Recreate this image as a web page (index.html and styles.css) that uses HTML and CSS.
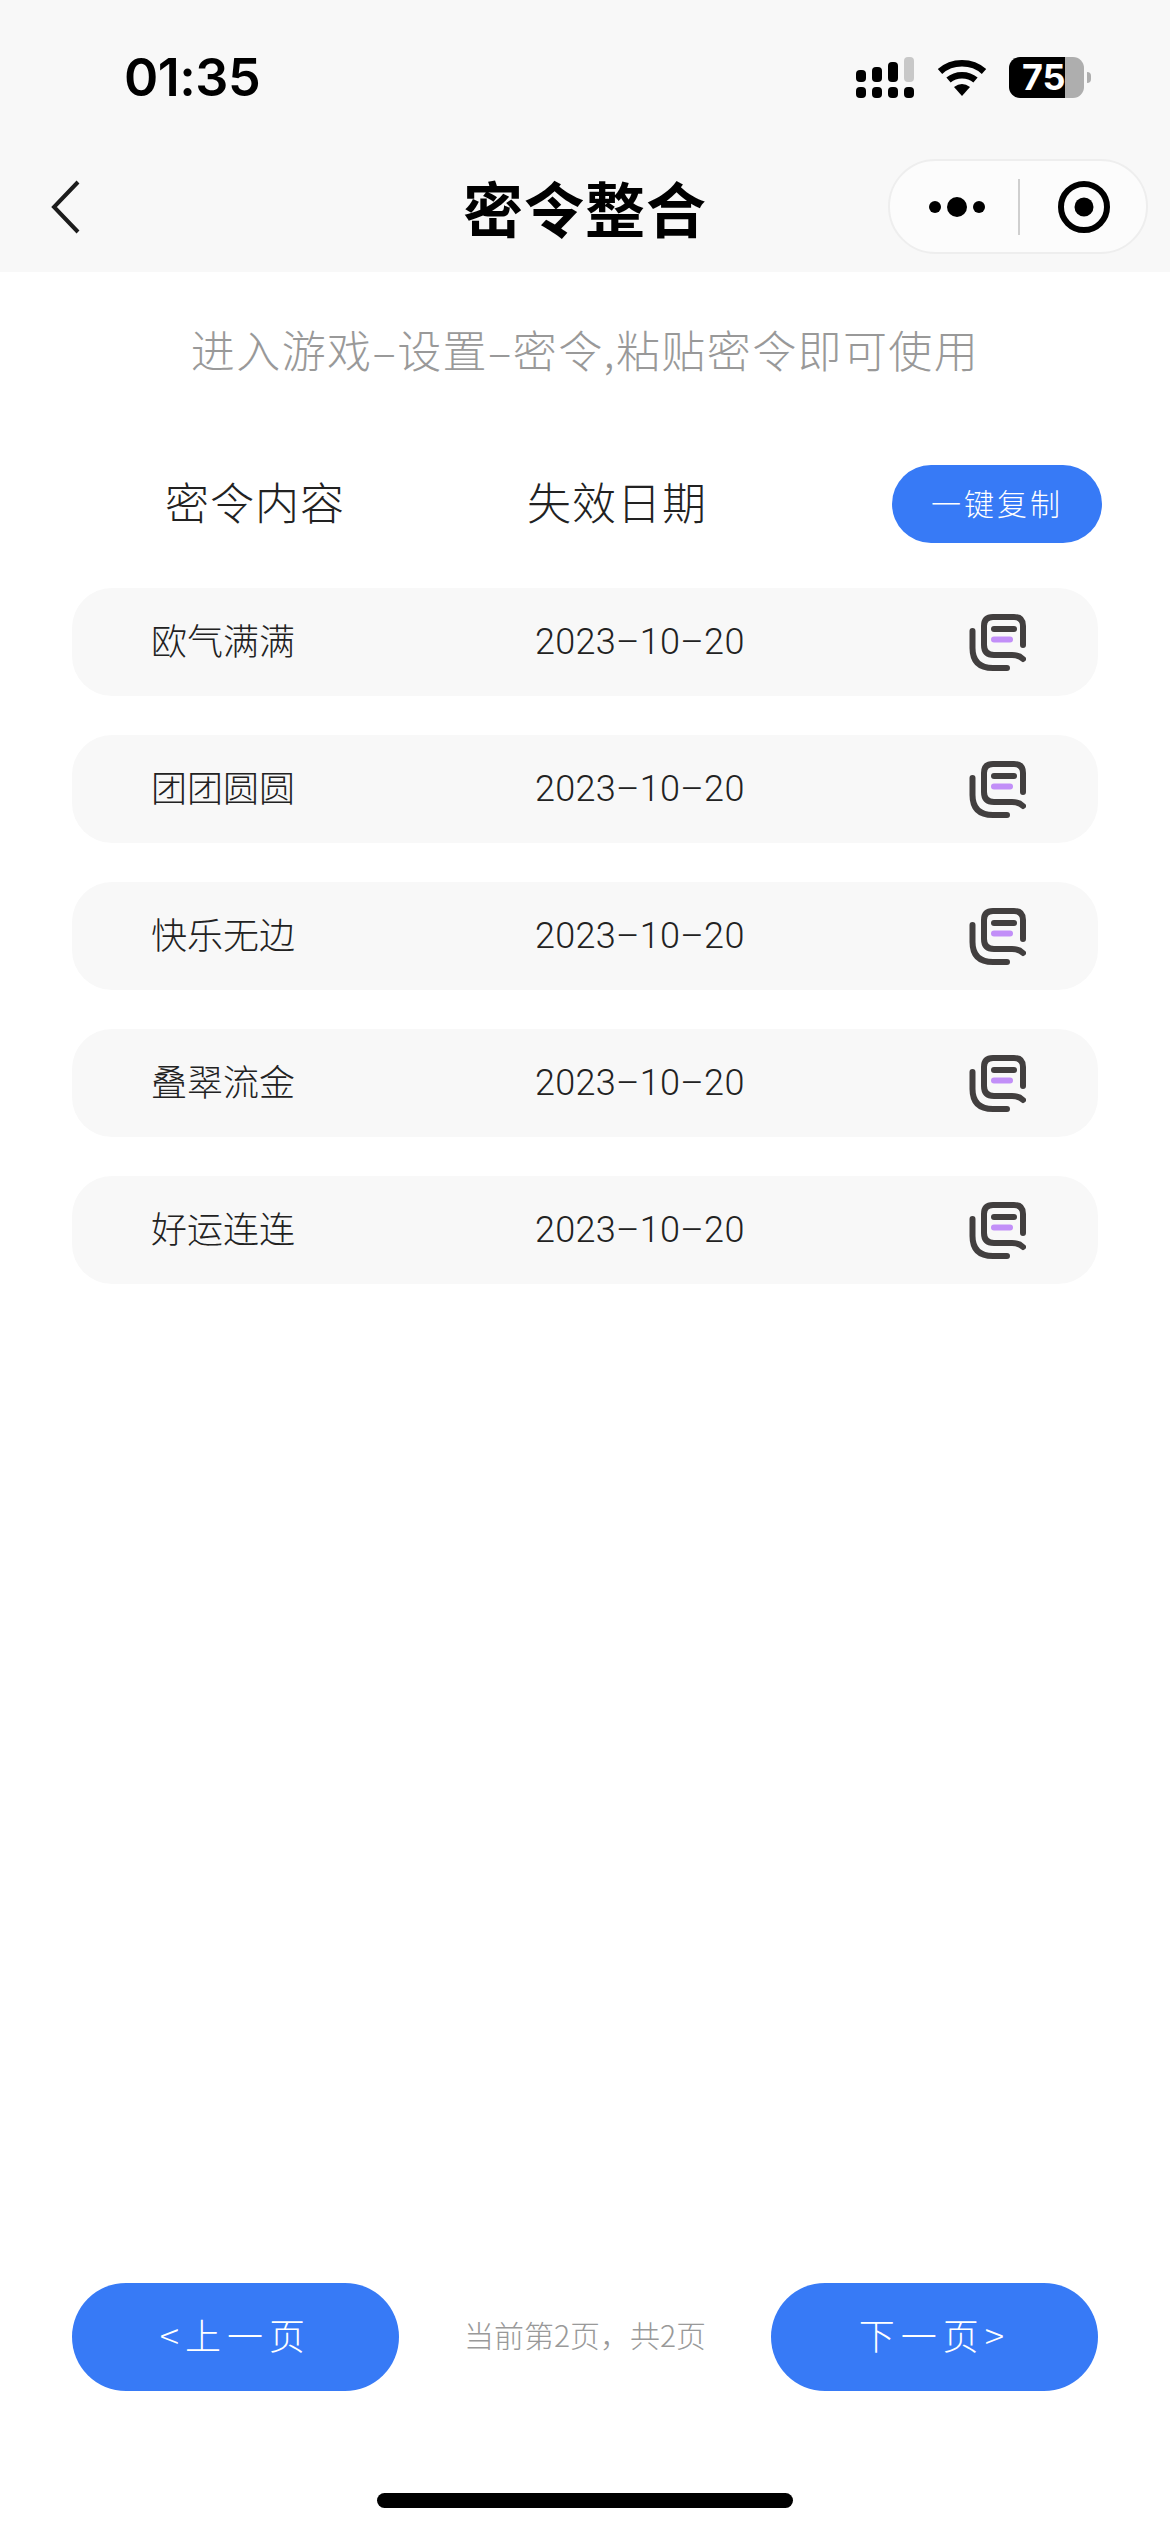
FILE: index.html
```html
<!DOCTYPE html>
<html lang="zh-CN">
<head>
<meta charset="utf-8">
<title>密令整合</title>
<link rel="stylesheet" href="styles.css">
</head>
<body>
<div class="page">
  <header class="top">
    <div class="status">
      <span class="time">01:35</span>
      <div class="status-icons">
        <svg class="signal" width="58" height="41" viewBox="0 0 58 41">
          <rect x="0" y="13" width="10" height="12" rx="4"/><rect x="16" y="10" width="10" height="15" rx="4"/><rect x="32" y="5" width="10" height="20" rx="4"/><rect class="signal-off" x="48" y="0" width="10" height="25" rx="4"/>
          <rect x="0" y="30" width="10" height="11" rx="4"/><rect x="16" y="30" width="10" height="11" rx="4"/><rect x="32" y="30" width="10" height="11" rx="4"/><rect x="48" y="30" width="10" height="11" rx="4"/>
        </svg>
        <svg class="wifi" width="50" height="37" viewBox="0 0 50 37">
          <path d="M3 12.500C15 1.500 35 1.500 47 12.500" fill="none" stroke="#000" stroke-width="6.500"/>
          <path d="M11.500 21C19 14.500 31 14.500 38.500 21" fill="none" stroke="#000" stroke-width="6.500"/>
          <path d="M17 28Q25 22 33 28L25 37Z"/>
        </svg>
        <div class="battery">75</div>
      </div>
    </div>
    <nav class="nav">
      <svg class="back" width="32" height="56" viewBox="0 0 32 56"><path d="M28 3 4 28 28 53" fill="none" stroke="#1c1c1c" stroke-width="4"/></svg>
      <h1 class="title">密令整合</h1>
      <div class="capsule">
        <svg width="56" height="20" viewBox="0 0 56 20"><circle cx="6" cy="10" r="6"/><circle cx="28" cy="10" r="10"/><circle cx="50" cy="10" r="6"/></svg>
        <span class="capsule-line"></span>
        <svg width="52" height="52" viewBox="0 0 52 52"><circle cx="26" cy="26" r="23" fill="none" stroke="#000" stroke-width="6"/><circle cx="26" cy="26" r="9.500"/></svg>
      </div>
    </nav>
  </header>

  <main class="main">
    <p class="hint">进入游戏–设置–密令,粘贴密令即可使用</p>
    <div class="head">
      <span class="head-name">密令内容</span>
      <span class="head-date">失效日期</span>
      <button class="copy-all">一键复制</button>
    </div>
    <ul class="list">
      <li class="row"><span class="row-name">欧气满满</span><span class="row-date">2023–10–20</span>
        <svg class="copy" width="57" height="57" viewBox="0 0 57 57"><path class="ic" d="M54 31V12Q54 3 45 3H24Q15 3 15 12V31Q15 41 25 41H43Q50 41 54 45"/><path class="ic" d="M3.500 17V34Q3.500 54 24 54H38"/><path class="ic ic-thin" d="M25 15H45"/><path class="ic ic-thin ic-accent" d="M25 25.500H41"/></svg></li>
      <li class="row"><span class="row-name">团团圆圆</span><span class="row-date">2023–10–20</span>
        <svg class="copy" width="57" height="57" viewBox="0 0 57 57"><path class="ic" d="M54 31V12Q54 3 45 3H24Q15 3 15 12V31Q15 41 25 41H43Q50 41 54 45"/><path class="ic" d="M3.500 17V34Q3.500 54 24 54H38"/><path class="ic ic-thin" d="M25 15H45"/><path class="ic ic-thin ic-accent" d="M25 25.500H41"/></svg></li>
      <li class="row"><span class="row-name">快乐无边</span><span class="row-date">2023–10–20</span>
        <svg class="copy" width="57" height="57" viewBox="0 0 57 57"><path class="ic" d="M54 31V12Q54 3 45 3H24Q15 3 15 12V31Q15 41 25 41H43Q50 41 54 45"/><path class="ic" d="M3.500 17V34Q3.500 54 24 54H38"/><path class="ic ic-thin" d="M25 15H45"/><path class="ic ic-thin ic-accent" d="M25 25.500H41"/></svg></li>
      <li class="row"><span class="row-name">叠翠流金</span><span class="row-date">2023–10–20</span>
        <svg class="copy" width="57" height="57" viewBox="0 0 57 57"><path class="ic" d="M54 31V12Q54 3 45 3H24Q15 3 15 12V31Q15 41 25 41H43Q50 41 54 45"/><path class="ic" d="M3.500 17V34Q3.500 54 24 54H38"/><path class="ic ic-thin" d="M25 15H45"/><path class="ic ic-thin ic-accent" d="M25 25.500H41"/></svg></li>
      <li class="row"><span class="row-name">好运连连</span><span class="row-date">2023–10–20</span>
        <svg class="copy" width="57" height="57" viewBox="0 0 57 57"><path class="ic" d="M54 31V12Q54 3 45 3H24Q15 3 15 12V31Q15 41 25 41H43Q50 41 54 45"/><path class="ic" d="M3.500 17V34Q3.500 54 24 54H38"/><path class="ic ic-thin" d="M25 15H45"/><path class="ic ic-thin ic-accent" d="M25 25.500H41"/></svg></li>
    </ul>
  </main>

  <footer class="pager">
    <button class="page-btn"><span>&lt;上一页</span></button>
    <span class="page-info">当前第2页，共2页</span>
    <button class="page-btn"><span>下一页&gt;</span></button>
  </footer>
  <div class="home-wrap"><div class="home"></div></div>
</div>
</body>
</html>
```
FILE: styles.css
```css
* { box-sizing: border-box; }
html, body { margin: 0; padding: 0; background: #fff; }
body { font-family: "Noto Sans CJK SC", "Liberation Sans", sans-serif; }
.page { width: 1170px; height: 2532px; display: flex; flex-direction: column; overflow: hidden; }

.top { background: #f8f8f8; height: 272px; flex: none; }
.status { height: 159px; padding: 57px 86px 0 124px; display: flex; justify-content: space-between; align-items: flex-start; }
.time { font-family: Inter, "Liberation Sans", sans-serif; font-weight: 600; font-size: 52px; line-height: 41px; color: #000; letter-spacing: -0.5px; }
.status-icons { display: flex; align-items: flex-start; }
.signal { margin-right: 23px; }
.signal-off { fill: #c8c8c8; }
.wifi { margin: 2px 22px 0 0; }
.battery { position: relative; width: 75px; height: 41px; border-radius: 11px; background: linear-gradient(90deg, #000 0, #000 56px, #aeaeae 56px); color: #fff; font-family: Inter, "Liberation Sans", sans-serif; font-weight: 700; font-size: 36px; line-height: 41px; padding-left: 13px; }
.battery::after { content: ""; position: absolute; left: 78px; top: 15px; width: 4px; height: 11px; background: #aeaeae; border-radius: 0 4px 4px 0; }

.nav { display: grid; grid-template-columns: 1fr auto 1fr; height: 113px; align-items: start; }
.back { margin: 20px 0 0 50px; }
.title { margin: 0; font-size: 60px; font-weight: 700; letter-spacing: 1px; line-height: 95px; color: #000; }
.capsule { justify-self: end; margin-right: 22px; width: 260px; height: 95px; border: 2px solid #eeeeee; border-radius: 48px; background: #fcfcfc; display: flex; align-items: center; padding-left: 39px; }
.capsule-line { width: 2px; height: 56px; background: #cfcfcf; margin: 0 38px 0 33px; }

.main { flex: 1; padding: 47px 72px 0; }
.hint { margin: 0; height: 60px; line-height: 60px; font-size: 44px; letter-spacing: 1.400px; color: #999; font-weight: 300; text-align: center; white-space: nowrap; }
.head { display: flex; align-items: center; height: 78px; margin-top: 86px; padding-left: 93px; }
.head-name { flex: none; width: 362px; font-size: 44px; letter-spacing: 1px; color: #222; font-weight: 300; padding-bottom: 6px; }
.head-date { flex: none; width: 365px; font-size: 44px; letter-spacing: 1px; color: #222; font-weight: 300; padding-bottom: 6px; }
.copy-all { flex: none; width: 210px; height: 78px; border: 0; border-radius: 39px; background: #377af6; color: #fff; font-family: inherit; font-weight: 300; font-size: 30px; letter-spacing: 3px; padding: 0 0 4px; }

.list { list-style: none; margin: 45px 0 0; padding: 0; display: flex; flex-direction: column; gap: 39px; }
.row { display: flex; align-items: center; height: 108px; border-radius: 40px; background: #f8f8f8; padding-left: 79px; font-size: 36px; color: #222; }
.row-name { flex: none; width: 384px; font-weight: 300; padding-bottom: 6px; }
.row-date { flex: none; width: 434px; font-family: Roboto, "Liberation Sans", sans-serif; font-weight: 300; letter-spacing: 0.300px; padding-bottom: 1px; }
.ic { fill: none; stroke: #423f3f; stroke-width: 6; stroke-linecap: round; }
.ic-thin { stroke-width: 6; }
.ic-accent { stroke: #c28ff8; }

.pager { flex: none; display: flex; justify-content: space-between; align-items: center; padding: 0 72px; height: 108px; }
.page-btn { width: 327px; height: 108px; border: 0; border-radius: 54px; background: #377af6; color: #fff; font-family: inherit; font-weight: 300; font-size: 36px; letter-spacing: 6px; padding: 0 0 6px; }
.page-info { font-size: 30px; font-weight: 300; color: #999; padding-bottom: 6px; }
.home-wrap { flex: none; height: 141px; padding-top: 102px; }
.home { width: 416px; height: 15px; margin: 0 auto; border-radius: 8px; background: #000; }
```
